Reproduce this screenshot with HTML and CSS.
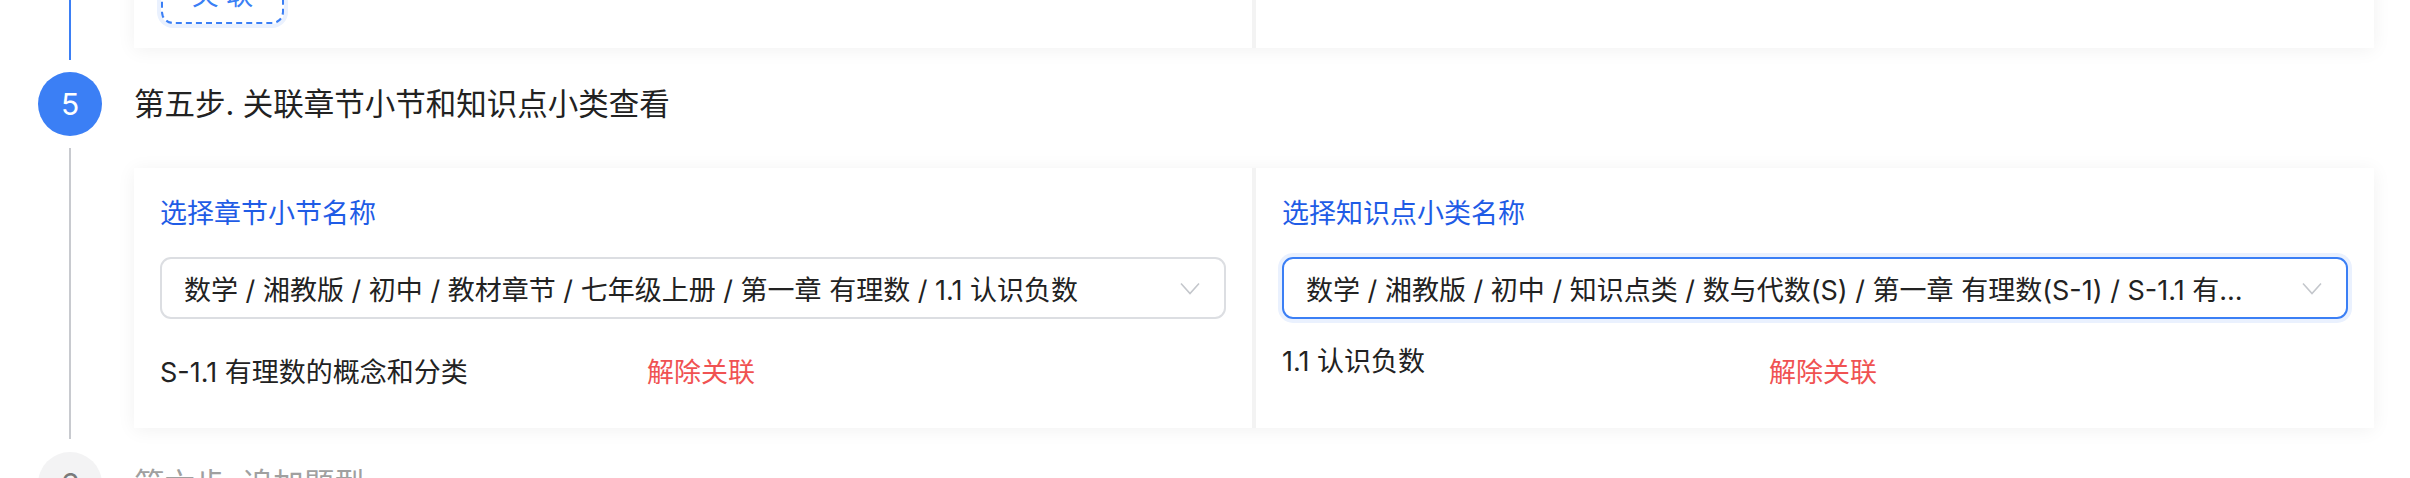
FILE: index.html
```html
<!DOCTYPE html>
<html lang="zh-CN">
<head>
<meta charset="utf-8">
<title>关联章节小节和知识点小类</title>
<link rel="stylesheet" href="styles.css">
</head>
<body>
<div class="viewport">
  <div class="steps">
    <section class="step step-done step-partial">
      <div class="step-head"><span class="step-line"></span></div>
      <div class="step-body">
        <div class="panel">
          <div class="panel-half">
            <button class="btn-dashed" type="button">关 联</button>
          </div>
          <div class="panel-half"></div>
        </div>
      </div>
    </section>

    <section class="step step-active">
      <div class="step-head">
        <span class="step-icon">5</span>
        <span class="step-line"></span>
      </div>
      <div class="step-body">
        <div class="step-title">第五步. 关联章节小节和知识点小类查看</div>
        <div class="panel">
          <div class="panel-half">
            <div class="field-label">选择章节小节名称</div>
            <div class="select">
              <span class="select-text">数学 / 湘教版 / 初中 / 教材章节 / 七年级上册 / 第一章 有理数 / 1.1 认识负数</span>
              <svg class="chevron" width="20" height="13" viewBox="0 0 20 13"><polyline points="1,1.5 10,11.5 19,1.5" fill="none" stroke="#c4c7cc" stroke-width="1.6"/></svg>
            </div>
            <div class="assoc-row assoc-row-mid">
              <span class="assoc-name">S-1.1 有理数的概念和分类</span>
              <a class="unlink">解除关联</a>
            </div>
          </div>
          <div class="panel-half">
            <div class="field-label">选择知识点小类名称</div>
            <div class="select select-focus">
              <span class="select-text">数学 / 湘教版 / 初中 / 知识点类 / 数与代数(S) / 第一章 有理数(S-1) / S-1.1 有理数的概念和分类</span>
              <svg class="chevron" width="20" height="13" viewBox="0 0 20 13"><polyline points="1,1.5 10,11.5 19,1.5" fill="none" stroke="#c4c7cc" stroke-width="1.6"/></svg>
            </div>
            <div class="assoc-row">
              <span class="assoc-name">1.1 认识负数</span>
              <a class="unlink">解除关联</a>
            </div>
          </div>
        </div>
      </div>
    </section>

    <section class="step step-wait">
      <div class="step-head">
        <span class="step-icon">6</span>
        <span class="step-line"></span>
      </div>
      <div class="step-body">
        <div class="step-title">第六步. 追加题型</div>
      </div>
    </section>
  </div>
</div>
</body>
</html>
```

FILE: styles.css
```css
html, body {
  margin: 0;
  padding: 0;
  background: #ffffff;
}

body {
  font-family: "Inter", "Noto Sans CJK SC", "Noto Sans", sans-serif;
  color: #262626;
}

.viewport {
  width: 2410px;
  height: 478px;
  overflow: hidden;
}

.steps {
  margin-top: -64px;
  padding: 0 36px 0 38px;
}

.step {
  display: flex;
  gap: 32px;
}

.step-head {
  width: 64px;
  flex: none;
  display: flex;
  flex-direction: column;
  align-items: center;
}

.step-icon {
  width: 64px;
  height: 64px;
  border-radius: 50%;
  display: flex;
  align-items: center;
  justify-content: center;
  font-size: 30px;
  flex: none;
}

.step-line {
  width: 2px;
  flex: 1;
  margin: 12px 0 13px;
  background: #c8cacf;
}

.step-partial .step-line {
  margin: 0 0 12px;
}

.step-done .step-line {
  background: #3b7ff5;
}

.step-active .step-icon {
  background: #3b7ff5;
  color: #ffffff;
}

.step-wait .step-icon {
  background: #f3f3f4;
  color: #7a7a7a;
}

.step-body {
  flex: 1;
  min-width: 0;
  padding-bottom: 24px;
}

.step-title {
  height: 64px;
  line-height: 64px;
  font-size: 30.5px;
  margin-bottom: 32px;
  color: #222222;
}

.step-wait .step-title {
  color: #a0a0a0;
}

.panel {
  display: grid;
  grid-template-columns: 1fr 1fr;
  gap: 4px;
  background: #f3f3f3;
  box-shadow: 0 2px 18px rgba(0, 0, 0, 0.06);
}

.panel-half {
  background: #ffffff;
  padding: 26px 26px 35px 26px;
  min-width: 0;
}

.step-partial .panel-half {
  padding: 26px 26px 24px 27px;
}

.btn-dashed {
  width: 123px;
  height: 62px;
  border: 2px dashed #3b7ff5;
  border-radius: 12px;
  background: #ffffff;
  color: #3b7ff5;
  font-family: inherit;
  font-size: 27px;
  box-shadow: 0 0 0 4px #eaf1fe;
  padding: 0;
}

.field-label {
  font-size: 27px;
  line-height: 40px;
  color: #1f5ce6;
  margin-bottom: 23px;
}

.select {
  height: 62px;
  box-sizing: border-box;
  border: 2px solid #dcdee2;
  border-radius: 11px;
  padding: 0 24px 0 22px;
  display: flex;
  align-items: center;
  gap: 40px;
  font-size: 27px;
  color: #222222;
}

.select-focus {
  border-color: #3b7ff5;
  box-shadow: 0 0 0 4px #eaf1fe;
}

.select-text {
  flex: 1;
  min-width: 0;
  white-space: nowrap;
  overflow: hidden;
  text-overflow: ellipsis;
}

.chevron {
  flex: none;
  display: block;
}

.assoc-row {
  display: flex;
  align-items: flex-start;
  margin-top: 23px;
  font-size: 27px;
  line-height: 40px;
}

.assoc-name {
  width: 487px;
  flex: none;
  color: #222222;
}

.assoc-row-mid .assoc-name {
  margin-top: 11px;
}

.unlink {
  margin-top: 11px;
  color: #f05252;
  cursor: pointer;
}
```
